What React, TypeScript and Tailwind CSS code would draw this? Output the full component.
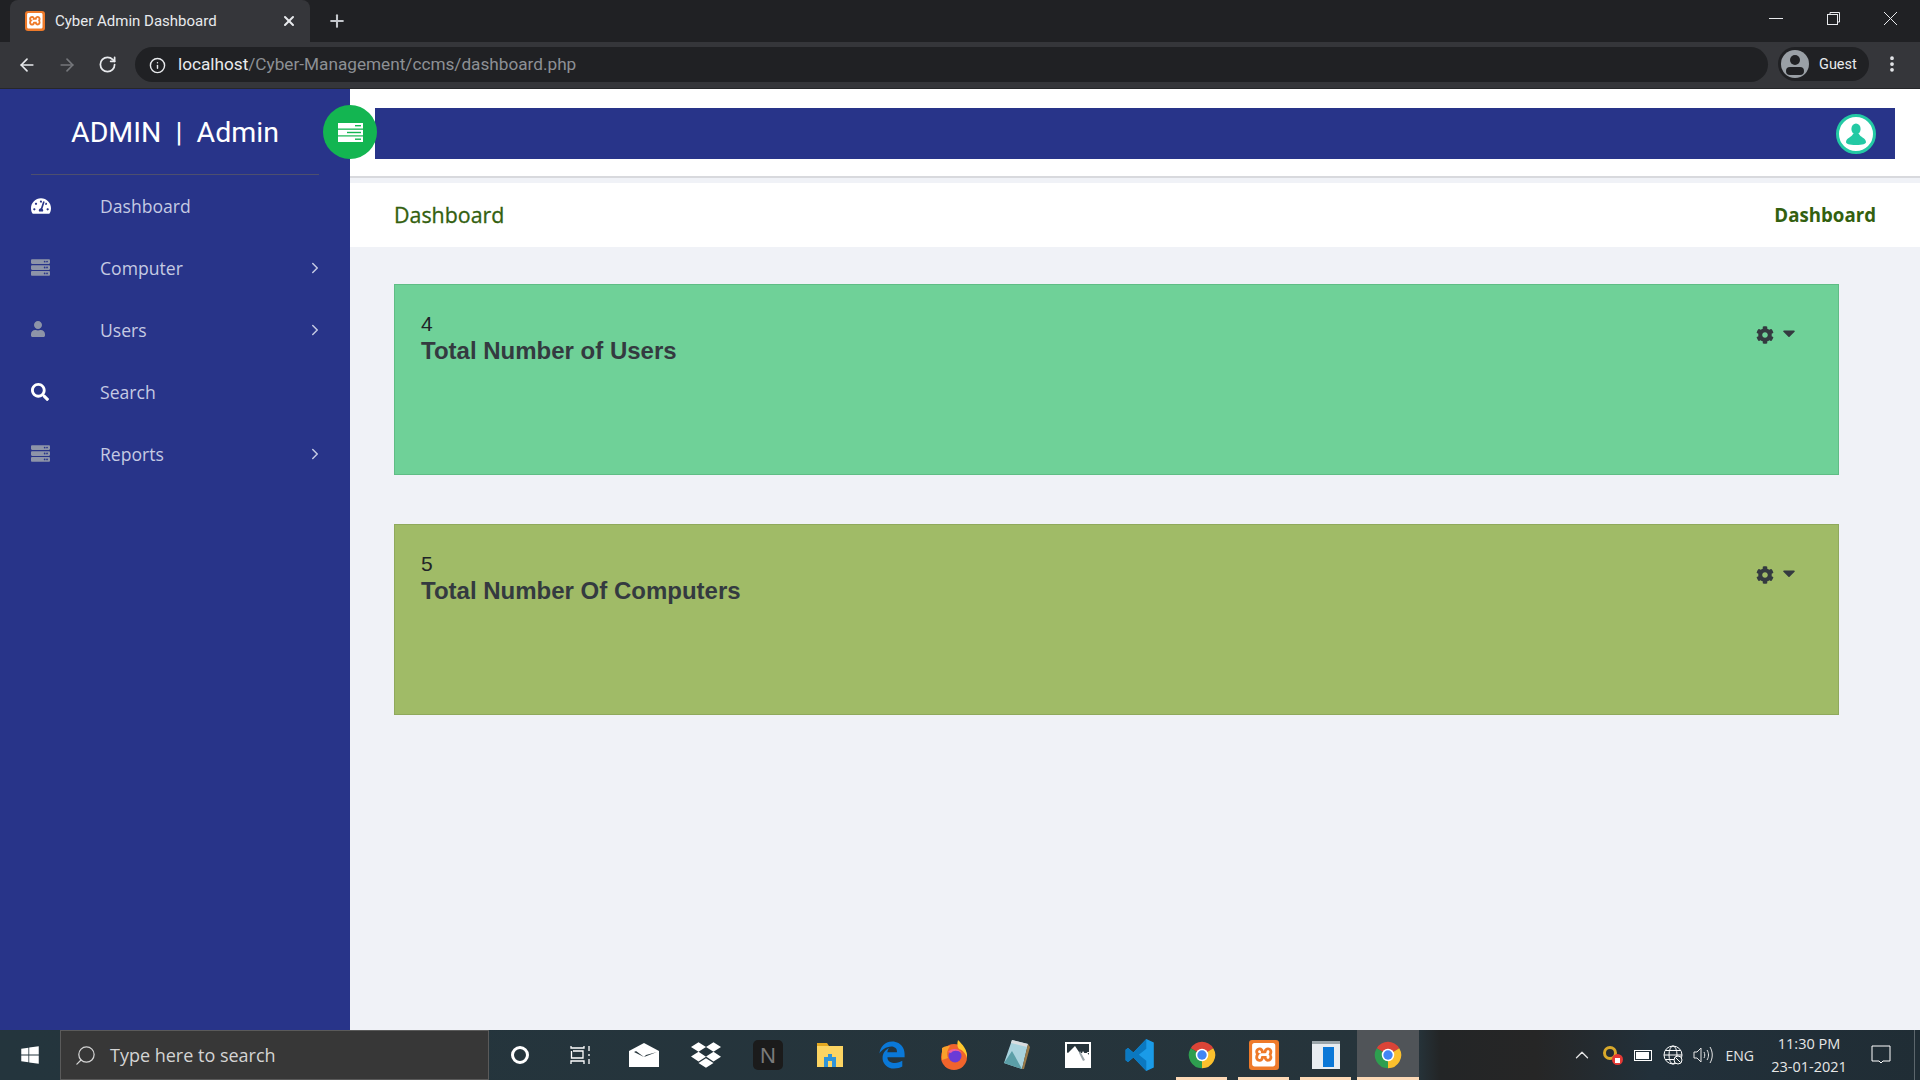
import React from "react";
import { FaTachometerAlt, FaServer, FaUser, FaSearch, FaCog, FaCaretDown, FaDropbox, FaWindows } from "react-icons/fa";
import { FaEdgeLegacy } from "react-icons/fa6";
import { SiXampp } from "react-icons/si";
import { ChevronRight, ArrowLeft, ArrowRight, RotateCw, Info, Plus, X, EllipsisVertical, Search, ChevronUp } from "lucide-react";

const Chrome = ({ s = 28 }: { s?: number }) => (
  <svg width={s} height={s} viewBox="0 0 48 48">
    <path d="M24 24 L6 13 A21 21 0 0 1 42 13 Z" fill="#db4437" />
    <path d="M24 24 L42 13 A21 21 0 0 1 24 45 Z" fill="#fbc02d" />
    <path d="M24 24 L24 45 A21 21 0 0 1 6 13 Z" fill="#2e9e4f" />
    <circle cx="24" cy="24" r="10" fill="#fff" />
    <circle cx="24" cy="24" r="7.5" fill="#4285f4" />
  </svg>
);

const Xampp = ({ s }: { s: number }) => (
  <div className="flex items-center justify-center rounded-[3px] bg-[#ee7a2a]" style={{ width: s, height: s }}>
    <SiXampp size={s * 0.78} color="#fff" />
  </div>
);

const menu = [
  { label: "Dashboard", icon: <FaTachometerAlt size={20} className="text-white" /> },
  { label: "Computer", icon: <FaServer size={19} className="-translate-y-[1px] text-[#8d94a8]" />, more: true },
  { label: "Users", icon: <FaUser size={16} className="-translate-x-[1px] -translate-y-[1px] text-[#8d94a8]" />, more: true },
  { label: "Search", icon: <FaSearch size={18} className="text-white" /> },
  { label: "Reports", icon: <FaServer size={19} className="-translate-y-[1px] text-[#8d94a8]" />, more: true },
];

const Card = ({ n, title, color, line }: { n: string; title: string; color: string; line: string }) => (
  <div className={`relative flex h-[191px] w-[1445px] justify-between border pl-[26px] pr-[39px] pt-[26px] ${color} ${line}`}>
    <div className="font-['Liberation_Sans',sans-serif] text-[#343a40]">
      <div className="text-[21px] leading-[25px] text-[#1f2428]">{n}</div>
      <div className="mt-[2px] text-[24px] font-bold leading-[26px]">{title}</div>
    </div>
    <div className="mt-[15px] flex h-[18px] items-start text-[#343a40]">
      <FaCog size={18} />
      <FaCaretDown size={20} className="ml-[5px] mt-[-3px]" />
    </div>
  </div>
);

const slot = "flex h-full w-[62px] shrink-0 items-center justify-center";

export default function App() {
  return (
    <div className="flex h-screen w-full flex-col overflow-hidden bg-[#f0f2f7] font-['Open_Sans',sans-serif]">
      {/* tab strip */}
      <div className="flex h-[42px] shrink-0 items-end bg-[#202124] pl-[10px] text-white">
        <div className="flex h-[42px] w-[300px] items-center rounded-t-[8px] bg-[#35363a] pl-[15px] pr-[13px]">
          <Xampp s={20} />
          <span className="ml-[10px] flex-1 font-['Roboto',sans-serif] text-[15px] text-[#e8eaed]">Cyber Admin Dashboard</span>
          <X size={16} strokeWidth={3} className="text-[#e8eaed]" />
        </div>
        <div className="flex h-[42px] w-[54px] items-center justify-center">
          <Plus size={20} strokeWidth={2.5} className="text-[#c4c7cc]" />
        </div>
        <div className="flex-1" />
        <div className="mb-[16px] mr-[22px] flex items-center text-[#e8eaed]">
          <svg width="14" height="15" viewBox="0 0 14 15" stroke="currentColor" className="mr-[43px]">
            <path d="M0 7.5H14" />
          </svg>
          <svg width="15" height="15" viewBox="0 0 15 15" fill="none" stroke="currentColor" className="mr-[42px]">
            <rect x="1.5" y="3.5" width="10" height="10" />
            <path d="M4 3V1.5H13.5V11H12" />
          </svg>
          <svg width="15" height="15" viewBox="0 0 15 15" stroke="currentColor">
            <path d="M1 1L14 14M14 1L1 14" />
          </svg>
        </div>
      </div>
      {/* toolbar */}
      <div className="flex h-[47px] shrink-0 items-start border-b border-[#26272a] bg-[#35363a] pt-[5px]">
        <div className="flex h-[35px] w-[135px] items-center pl-[17px] text-[#e8eaed]">
          <ArrowLeft size={20} strokeWidth={2} />
          <ArrowRight size={20} strokeWidth={2} className="ml-[20px] text-[#75777b]" />
          <RotateCw size={19} strokeWidth={2.2} className="ml-[21px]" />
        </div>
        <div className="flex h-[35px] w-[1633px] items-center rounded-full bg-[#202124] pl-[14px] pt-[1px] font-['Roboto',sans-serif] text-[17.2px]">
          <Info size={17} className="text-[#e8eaed]" />
          <span className="ml-[12px] text-[#e8eaed]">localhost</span>
          <span className="text-[#8d9095]">/Cyber-Management/ccms/dashboard.php</span>
        </div>
        <div className="ml-[10px] flex h-[34px] w-[91px] items-center rounded-full bg-[#202124] pl-[3px]">
          <div className="relative h-[28px] w-[28px] overflow-hidden rounded-full bg-[#9aa0a6]">
            <div className="absolute left-[9px] top-[5px] h-[10px] w-[10px] rounded-full bg-[#202124]" />
            <div className="absolute left-[5px] top-[17px] h-[8px] w-[18px] rounded-full bg-[#202124]" />
          </div>
          <span className="ml-[10px] pt-[1px] font-['Roboto',sans-serif] text-[14.5px] text-[#e8eaed]">Guest</span>
        </div>
        <EllipsisVertical size={20} strokeWidth={2.5} className="ml-[13px] mt-[7px] text-[#e8eaed]" />
      </div>
      {/* page */}
      <div className="flex min-h-0 flex-1">
        <aside className="flex w-[350px] shrink-0 flex-col bg-[#283489]">
          <div className="mx-[31px] flex h-[86px] shrink-0 items-center justify-center border-b border-[#4d4f6e] pt-[3px] text-[28.5px] text-white">
            <span className="font-['Roboto',sans-serif] whitespace-pre">ADMIN  |  Admin</span>
          </div>
          {menu.map((m) => (
            <div key={m.label} className="flex h-[62px] items-center pl-[31px] pr-[26px] text-[17.6px] text-[#c5cae3]">
              <div className="flex w-[69px] items-center">{m.icon}</div>
              <span className="flex-1">{m.label}</span>
              {m.more && <ChevronRight size={18} className="text-[#c5cae3]" />}
            </div>
          ))}
        </aside>
        <main className="flex min-w-0 flex-1 flex-col">
          <header className="relative h-[89px] shrink-0 border-b-2 border-[#d8d9dd] bg-white pl-[25px] pr-[25px] pt-[19px]">
            <div className="flex h-[51px] items-center justify-end bg-[#283489] pr-[19px]">
              <div className="flex h-[40px] w-[40px] items-center justify-center rounded-full border-[3px] border-[#23c9a4] bg-white">
                <svg width="26" height="26" viewBox="0 0 26 26" fill="#23c9a4">
                  <ellipse cx="13" cy="8" rx="4.6" ry="5.6" />
                  <path d="M10 13C9 16 3 17 3 21C3 23 6 24 13 24C20 24 23 23 23 21C23 17 17 16 16 13Z" />
                </svg>
              </div>
            </div>
            <button className="absolute left-[-27px] top-[16px] flex h-[54px] w-[54px] items-center justify-center rounded-full bg-[#13b551]">
              <svg width="25" height="19" viewBox="0 0 25 19">
                <rect width="25" height="5.5" fill="#fff" />
                <rect y="6.8" width="25" height="5.5" fill="#fff" />
                <rect y="13.5" width="25" height="5.5" fill="#fff" />
                <rect x="17" y="2" width="6" height="1.4" fill="#13b551" />
                <rect x="9" y="8.8" width="14" height="1.4" fill="#13b551" />
                <rect x="17" y="15.5" width="6" height="1.4" fill="#13b551" />
              </svg>
            </button>
          </header>
          <div className="mt-[5px] flex h-[64px] shrink-0 items-center justify-between bg-white pl-[44px] pr-[44px] pt-[1px] text-[21.4px] text-[#33600f]">
            <span className="font-medium [-webkit-text-stroke:0.3px_#33600f]">Dashboard</span>
            <span className="text-[18.7px] font-bold">Dashboard</span>
          </div>
          <div className="flex flex-col gap-[49px] pl-[44px] pt-[37px]">
            <Card n="4" title="Total Number of Users" color="bg-[#6fd198]" line="border-[#5fbd85]" />
            <Card n="5" title="Total Number Of Computers" color="bg-[#a0bb67]" line="border-[#8fa95c]" />
          </div>
        </main>
      </div>
      {/* taskbar */}
      <div className="flex h-[50px] shrink-0 items-center bg-[linear-gradient(90deg,#24353d_0%,#26343b_73.8%,#232526_75%,#262626_80%,#22303a_86%,#202d35_100%)] text-white">
        <div className="flex h-full w-[60px] items-center justify-center">
          <FaWindows size={20} />
        </div>
        <div className="flex h-full w-[429px] items-center border border-[#5a5a5a] bg-[#373737] pl-[13px] text-[18px] text-[#d4d4d4]">
          <Search size={23} strokeWidth={1.3} className="-scale-x-100" />
          <span className="ml-[13px]">Type here to search</span>
        </div>
        <div className={slot}>
          <div className="h-[18px] w-[18px] rounded-full border-[3px] border-white" />
        </div>
        <div className={slot}>
          <svg width="22" height="20" viewBox="0 0 22 20" fill="none" stroke="#fff" strokeWidth="1.3" className="mr-[2px]">
            <path d="M1 1V3H14V1M3 6H13V13H1.5V6M1 19V16H14V19M19 1V6M19 9V11M19 14V19" />
          </svg>
        </div>
        <div className={slot}>
          <svg width="30" height="24" viewBox="0 0 30 24" fill="#fff">
            <path d="M15 0L30 8V24H0V8Z" />
            <path d="M5 9L15 14L7 8L15 4Z" fill="#26343b" />
            <path d="M15 14L28 9L17 12Z" fill="#26343b" />
          </svg>
        </div>
        <div className={slot}>
          <FaDropbox size={30} />
        </div>
        <div className={slot}>
          <div className="flex h-[30px] w-[30px] items-center justify-center rounded-[5px] bg-[#1b1b1b] font-['Liberation_Sans',sans-serif] text-[22px] text-[#7a7a7a]">N</div>
        </div>
        <div className={slot}>
          <svg width="28" height="28" viewBox="0 0 28 28">
            <path d="M1 2H11L13 5H1Z" fill="#e3a821" />
            <rect x="1" y="5" width="26" height="21" fill="#fcd462" />
            <path d="M8 26V16H12V13H16V16H20V26H16V20H12V26Z" fill="#2f93d8" />
          </svg>
        </div>
        <div className={slot}>
          <FaEdgeLegacy size={28} color="#0a78d7" />
        </div>
        <div className={slot}>
          <svg width="28" height="30" viewBox="0 0 28 30">
            <circle cx="14" cy="17" r="13" fill="#f0642c" />
            <path d="M18 0C22 4 28 10 27 18C26 14 23 10 19 9C17 7 17 3 18 0Z" fill="#ffc82e" />
            <path d="M2 8C5 6 8 6 10 6C8 9 6 13 8 18L2 20Z" fill="#f9a02b" />
            <circle cx="15" cy="16" r="6.5" fill="#6b3bd6" />
            <path d="M8 12C11 8 19 8 22 13C18 10 13 10 11 13Z" fill="#f25c9d" />
          </svg>
        </div>
        <div className={slot}>
          <svg width="28" height="32" viewBox="0 0 28 32">
            <path d="M10 1L26 5L20 30L2 24Z" fill="#a9d3de" />
            <path d="M2 24L10 12L20 30Z" fill="#5b9fa8" />
            <path d="M10 1L26 5L25 8L9 4Z" fill="#d9dde0" />
            <path d="M26 5L28 8L22 30L20 30Z" fill="#9a7b4a" />
          </svg>
        </div>
        <div className={slot}>
          <svg width="26" height="26" viewBox="0 0 26 26">
            <rect width="26" height="26" fill="#fff" />
            <rect x="2" y="2" width="22" height="8" fill="#26343b" />
            <path d="M2 11L8 2H12L14 7L17 4L24 13V11Z" fill="#26343b" />
            <path d="M2 24V12L10 4L16 13L18 9L24 18V24Z" fill="#fff" />
            <path d="M15 9L20 18L18 19L14 11Z" fill="#9aa5aa" />
          </svg>
        </div>
        <div className={slot}>
          <svg width="30" height="34" viewBox="0 0 100 113">
            <path d="M71 3L96 15V98L71 110L28 65L10 80L2 74V39L10 33L28 48Z" fill="#1a9be8" />
            <path d="M71 3V36L46 56L71 76V110L28 65L10 80L2 74V39L10 33L28 48Z" fill="#0b78c0" />
          </svg>
        </div>
        <div className={`${slot} relative`}>
          <Chrome s={30} />
          <div className="absolute bottom-0 left-[5px] right-[6px] h-[3px] bg-[#fcd9b6]" />
        </div>
        <div className={`${slot} relative`}>
          <Xampp s={30} />
          <div className="absolute bottom-0 left-[5px] right-[6px] h-[3px] bg-[#fcd9b6]" />
        </div>
        <div className={`${slot} relative`}>
          <div className="flex h-[28px] w-[28px] items-center justify-center border-t-[3px] border-[#9aa5aa] bg-[#e8edf1]">
            <div className="ml-[4px] h-[20px] w-[11px] bg-[#0b78d7]" />
          </div>
          <div className="absolute bottom-0 left-[5px] right-[6px] h-[3px] bg-[#fcd9b6]" />
        </div>
        <div className={`${slot} relative bg-[#505458]`}>
          <Chrome s={30} />
          <div className="absolute bottom-0 left-0 right-0 h-[3px] bg-[#fcd9b6]" />
        </div>
        <div className="flex-1" />
        <div className="flex h-full items-center text-[#e6e6e6]">
          <ChevronUp size={22} strokeWidth={1.4} />
          <div className="relative ml-[10px] h-[20px] w-[20px]">
            <div className="absolute left-0 top-[1px] h-[14px] w-[14px] rounded-full border-[3px] border-[#d9a92b]" />
            <div className="absolute bottom-0 right-0 h-[11px] w-[11px] rounded-full bg-[#e53935]" />
            <div className="absolute bottom-[2px] right-[3px] h-[5px] w-[5px] bg-white" />
          </div>
          <div className="ml-[11px] flex h-[11px] w-[18px] items-center border border-white p-[1px]">
            <div className="h-full w-[13px] bg-white" />
          </div>
          <svg width="20" height="20" viewBox="0 0 20 20" fill="none" stroke="#fff" strokeWidth="1" className="ml-[11px]">
            <circle cx="10" cy="10" r="9" />
            <ellipse cx="10" cy="10" rx="4" ry="9" />
            <path d="M1 10H19M2.5 5.5H17.5M2.5 14.5H17.5" />
            <circle cx="15" cy="15" r="4" fill="#26343b" />
            <path d="M12.5 12.5L17.5 17.5" />
          </svg>
          <svg width="20" height="20" viewBox="0 0 20 20" fill="none" stroke="#e6e6e6" strokeWidth="1" className="ml-[10px]">
            <path d="M1 7H4L8 3V17L4 13H1Z" />
            <path d="M11 7C12 9 12 11 11 13M14 5C16 8 16 12 14 15M17 2C20 7 20 13 17 18" />
          </svg>
          <span className="ml-[13px] text-[14px]">ENG</span>
          <div className="ml-[15px] flex w-[80px] flex-col items-center text-[14.5px] leading-[23px]">
            <span>11:30 PM</span>
            <span>23-01-2021</span>
          </div>
          <svg width="20" height="20" viewBox="0 0 20 20" fill="none" stroke="#fff" strokeWidth="1" className="ml-[22px]">
            <path d="M1 1H19V16H12L10 18L8 16H1Z" />
          </svg>
          <div className="ml-[23px] h-full w-[1px] bg-[#5c666c]" />
          <div className="w-[5px]" />
        </div>
      </div>
    </div>
  );
}
